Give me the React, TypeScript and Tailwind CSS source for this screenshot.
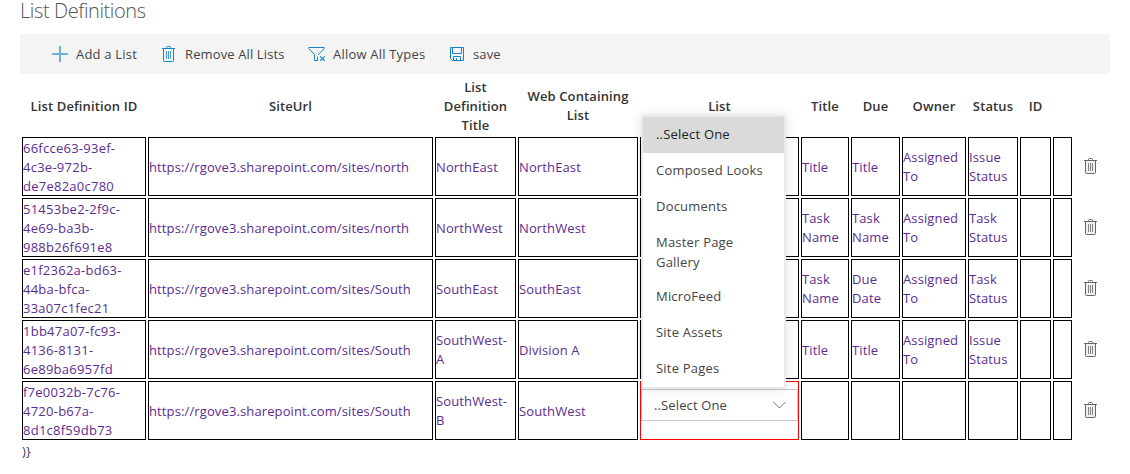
import type { ReactNode } from "react";

type Row = {
  id: string[];
  site: string;
  title: string[];
  web: string;
  fields: string[][];
};

const rows: Row[] = [
  { id: ["66fcce63-93ef-", "4c3e-972b-", "de7e82a0c780"], site: "north", title: ["NorthEast"], web: "NorthEast", fields: [["Title"], ["Title"], ["Assigned", "To"], ["Issue", "Status"], [], []] },
  { id: ["51453be2-2f9c-", "4e69-ba3b-", "988b26f691e8"], site: "north", title: ["NorthWest"], web: "NorthWest", fields: [["Task", "Name"], ["Task", "Name"], ["Assigned", "To"], ["Task", "Status"], [], []] },
  { id: ["e1f2362a-bd63-", "44ba-bfca-", "33a07c1fec21"], site: "South", title: ["SouthEast"], web: "SouthEast", fields: [["Task", "Name"], ["Due", "Date"], ["Assigned", "To"], ["Task", "Status"], [], []] },
  { id: ["1bb47a07-fc93-", "4136-8131-", "6e89ba6957fd"], site: "South", title: ["SouthWest-", "A"], web: "Division A", fields: [["Title"], ["Title"], ["Assigned", "To"], ["Issue", "Status"], [], []] },
  { id: ["f7e0032b-7c76-", "4720-b67a-", "8d1c8f59db73"], site: "South", title: ["SouthWest-", "B"], web: "SouthWest", fields: [[], [], [], [], [], []] },
];

const headers: string[][] = [
  ["List Definition ID"],
  ["SiteUrl"],
  ["List", "Definition", "Title"],
  ["Web Containing", "List"],
  ["List"],
  ["Title"],
  ["Due"],
  ["Owner"],
  ["Status"],
  ["ID"],
];

const options: string[][] = [
  ["Composed Looks"],
  ["Documents"],
  ["Master Page", "Gallery"],
  ["MicroFeed"],
  ["Site Assets"],
  ["Site Pages"],
];

const columns = "grid grid-cols-[124px_285px_81px_120px_159px_48px_49px_64px_50px_31px_19px_34px] gap-x-[2px]";

function TrashIcon({ fill = "none" }: { fill?: string }) {
  return (
    <svg width="14" height="16" viewBox="0 0 14 16" fill="none" stroke="currentColor" className="block shrink-0">
      <path d="M1.5 2.5V14.5Q1.5 15.5 2.5 15.5H10.5Q11.5 15.5 11.5 14.5V2.5" fill={fill} />
      <path d="M0 2.5H13M4.5 2.5V1.5Q4.5.5 5.5.5H7.5Q8.5.5 8.5 1.5V2.5" />
      <path d="M4.5 5V13M6.5 5V13M8.5 5V13" strokeOpacity="0.8" />
    </svg>
  );
}

function Cell({ lines = [], children, red }: { lines?: string[]; children?: ReactNode; red?: boolean }) {
  return (
    <div
      className={`flex h-[59px] flex-col justify-center border whitespace-nowrap text-[#5c2d91] ${red ? "border-[#ff0000]" : "border-black"} ${lines.length % 2 === 1 ? "pt-[2px]" : ""} ${lines.length === 3 ? "tracking-[0.25px]" : ""}`}
    >
      {lines.map((l, i) => <span key={i}>{l}</span>)}
      {children}
    </div>
  );
}

function Picker() {
  return (
    <div className="relative mb-auto mt-[7px] text-[#444]">
      <div className="flex h-8 items-center justify-between border border-[#c8c8c8] pr-[11px] pl-3">
        <span>..Select One</span>
        <svg width="13" height="8" viewBox="0 0 13 8" fill="none" stroke="#777" className="block">
          <path d="M.5 1L6.5 7L12.5 1" />
        </svg>
      </div>
      <div className="absolute bottom-full left-0 w-[145px] border-2 border-[#eaeaea] bg-white leading-5 tracking-[0.2px] shadow-[0_0_10px_rgba(0,0,0,0.12)]">
        <div className="h-9 bg-[#dadada] px-[13px] py-[7px] text-[#222]">..Select One</div>
        {options.map((o) => (
          <div key={o[0]} className="flex flex-col px-[13px] pt-[7px] pb-[9px] has-[span+span]:pb-[7px]">
            {o.map((l) => <span key={l}>{l}</span>)}
          </div>
        ))}
      </div>
    </div>
  );
}

export default function App() {
  return (
    <div className="h-[474px] w-[1130px] overflow-hidden bg-white font-['Open_Sans','Noto_Sans',sans-serif] text-[13px] leading-[19px] tracking-[0.12px] text-[#333]">
      <h1 className="h-[34px] pl-[20px] text-[20px] leading-[22px] font-light tracking-[-0.4px] text-[#555]">List Definitions</h1>
      <div className="mx-5 flex h-10 items-center bg-[#f4f4f4] tracking-[0.2px] text-[#444]">
        <button className="ml-8 flex h-10 w-[110px] items-center gap-2">
          <svg width="16" height="16" viewBox="0 0 16 16" fill="none" stroke="#0078c4" strokeOpacity="0.55" strokeWidth="2"><path d="M8 0V16M0 8H16" /></svg>
          <span>Add a List</span>
        </button>
        <button className="flex h-10 w-[146px] items-center gap-[9px] tracking-[0.12px]">
          <span className="text-[#1683c8]"><TrashIcon /></span>
          <span>Remove All Lists</span>
        </button>
        <button className="flex h-10 w-[142px] items-center gap-2">
          <svg width="18" height="16" viewBox="0 0 18 16" fill="none" stroke="#1683c8" className="-mr-px shrink-0">
            <path d="M9.5 10.5V14.5H6.5V8.5L.8 2.7V1.5H16.2V2.7L9.9 8.9" />
            <path d="M12.2 10.3L16.8 14.9M16.8 10.3L12.2 14.9" strokeWidth="1.2" />
          </svg>
          <span>Allow All Types</span>
        </button>
        <button className="flex h-10 items-center gap-[9px] tracking-[0.12px]">
          <svg width="14" height="14" viewBox="0 0 14 14" fill="none" stroke="#1683c8">
            <path d="M.5.5H13.5V13.5H2.5L.5 11.5ZM2.5.5V6.5H11.5V.5M3.5 13.5V9.5H10.5V13.5M6.5 11V13.5" />
          </svg>
          <span>save</span>
        </button>
      </div>
      <div className="pl-[22px]">
        <div className={`${columns} h-[63px] pt-[1px] text-center font-semibold whitespace-nowrap`}>
          {headers.map((h, i) => (
            <div key={i} className="flex flex-col items-center justify-center">
              {h.map((l) => <span key={l}>{l}</span>)}
            </div>
          ))}
        </div>
        <div className="flex flex-col gap-[2px]">
          {rows.map((r, i) => (
            <div key={i} className={columns}>
              <Cell lines={r.id} />
              <Cell lines={[`https://rgove3.sharepoint.com/sites/${r.site}`]} />
              <Cell lines={r.title} />
              <Cell lines={[r.web]} />
              <Cell red={i === 4}>{i === 4 && <Picker />}</Cell>
              {r.fields.map((f, j) => <Cell key={j} lines={f} />)}
              <div className="flex items-center pb-[1px] pl-[10px] text-[#666]"><TrashIcon fill="#f0f0f0" /></div>
            </div>
          ))}
        </div>
        <div className="pt-[2px] text-[#444]">{")}"}</div>
      </div>
    </div>
  );
}
